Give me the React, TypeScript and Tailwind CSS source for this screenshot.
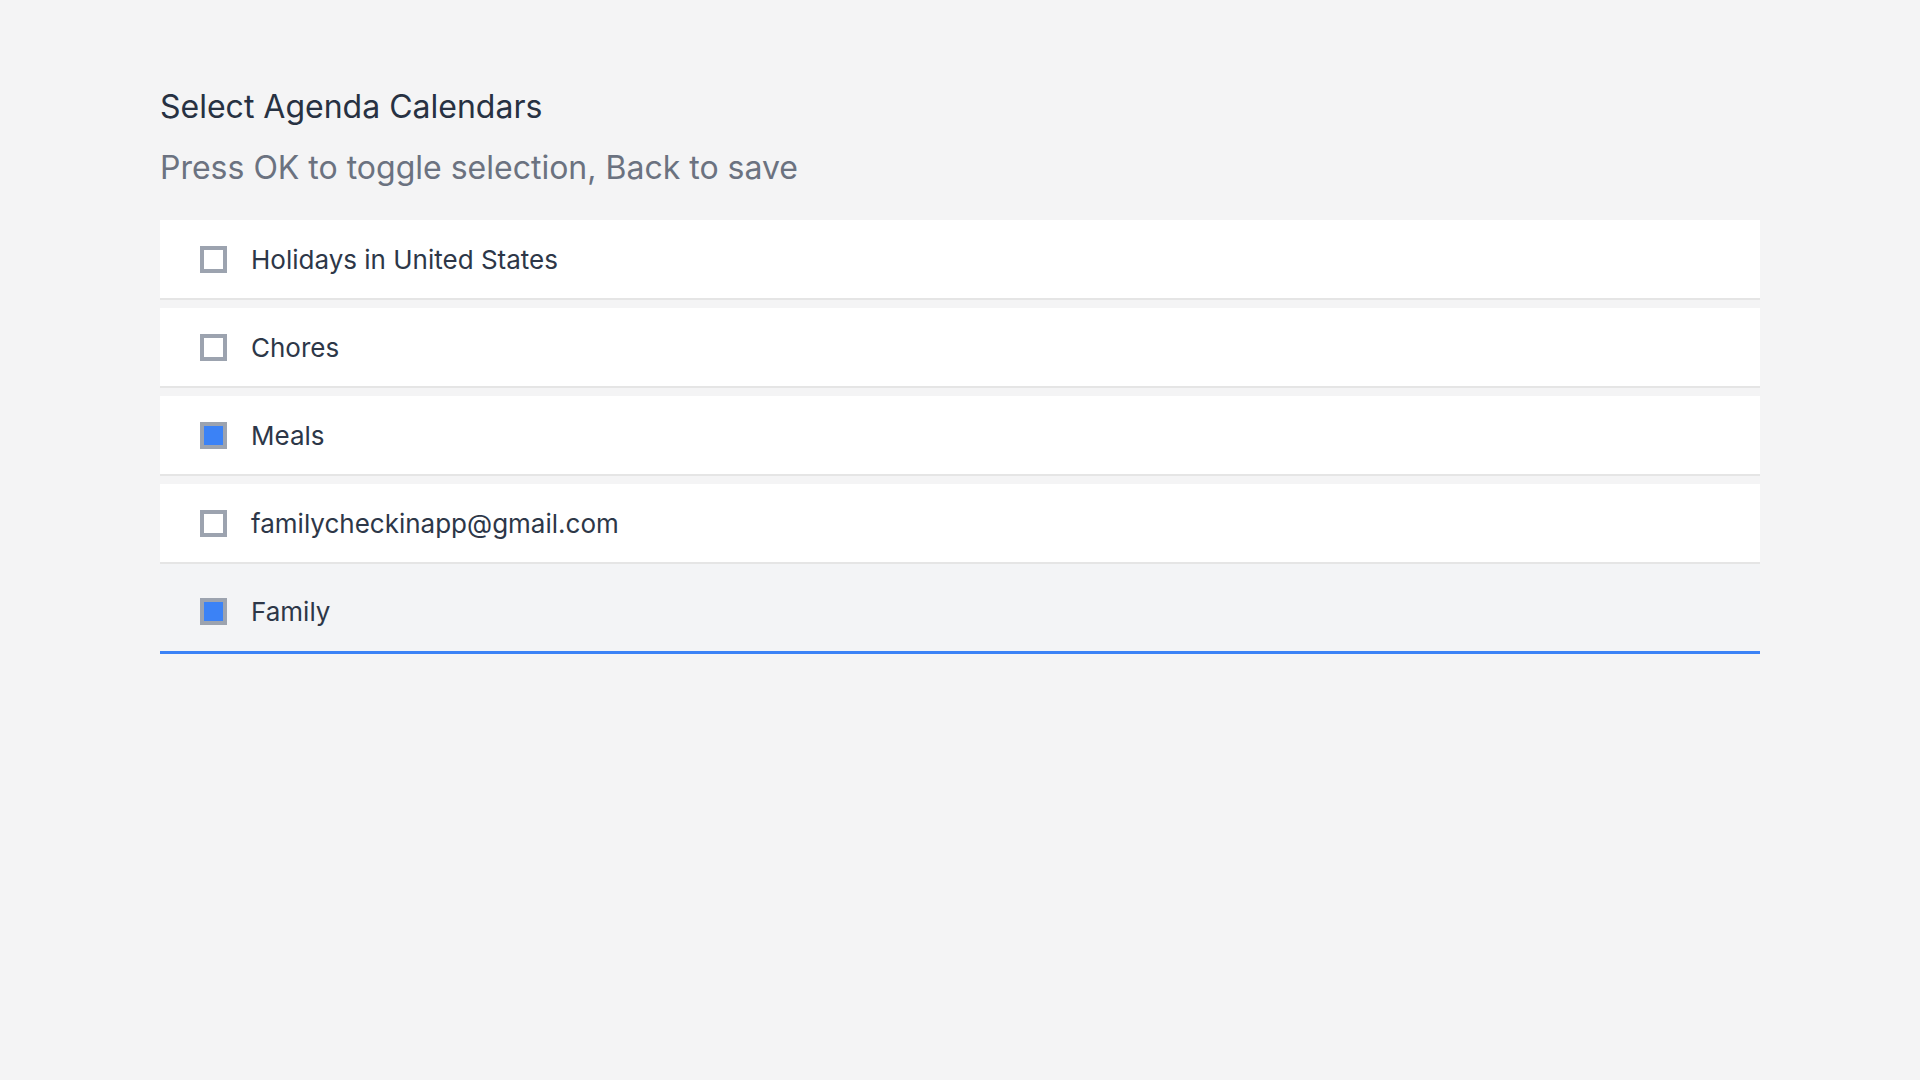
import React from 'react';

const calendars = [
  { name: 'Holidays in United States', selected: false },
  { name: 'Chores', selected: false },
  { name: 'Meals', selected: true },
  { name: 'familycheckinapp@gmail.com', selected: false },
  { name: 'Family', selected: true },
];

const focusedIndex = 4;

function Checkbox({ checked }: { checked: boolean }) {
  return (
    <div className="w-[27px] h-[27px] border-[4px] border-[#9ca3af] bg-white shrink-0">
      {checked && <div className="w-full h-full bg-[#3b82f6]" />}
    </div>
  );
}

export default function App() {
  return (
    <div
      className="min-h-screen w-full bg-[#f4f4f5] px-[160px] pt-[87px]"
      style={{ fontFamily: 'Inter, "Noto Sans", sans-serif' }}
    >
      <h1 className="text-[32px] leading-[40px] text-[#273142]">Select Agenda Calendars</h1>
      <p className="text-[32px] leading-[40px] mt-[21px] text-[#6b7280]">
        Press OK to toggle selection, Back to save
      </p>

      <div className="mt-[32px] flex flex-col">
        {calendars.map((c, idx) => {
          const focused = idx === focusedIndex;
          return (
            <div
              key={c.name}
              className={
                focused
                  ? 'flex items-center gap-[24px] pl-[40px] pt-[8px] -mt-[8px] h-[90px] bg-[#f3f4f6] border-b-[3px] border-[#3b82f6]'
                  : 'flex items-center gap-[24px] pl-[40px] h-[80px] mb-[8px] bg-white border-b-2 border-[#e5e5e5]'
              }
            >
              <Checkbox checked={c.selected} />
              <span className="text-[26px] text-[#2d3748]">{c.name}</span>
            </div>
          );
        })}
      </div>
    </div>
  );
}
